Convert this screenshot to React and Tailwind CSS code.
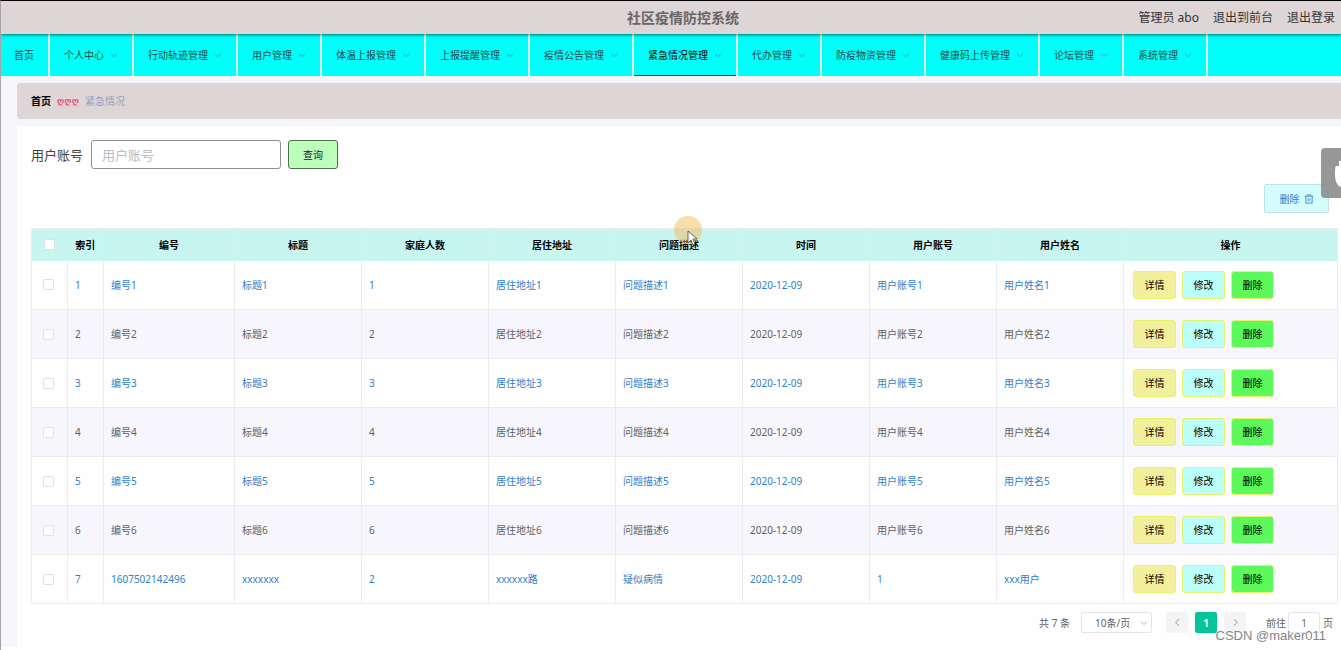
const menu = [
  "个人中心", "行动轨迹管理", "用户管理", "体温上报管理", "上报提醒管理", "疫情公告管理",
  "紧急情况管理", "代办管理", "防疫物资管理", "健康码上传管理", "论坛管理", "系统管理",
];
const heads = ["编号", "标题", "家庭人数", "居住地址", "问题描述", "时间", "用户账号", "用户姓名"];
const rows = [1, 2, 3, 4, 5, 6].map((n) => [
  `编号${n}`, `标题${n}`, `${n}`, `居住地址${n}`, `问题描述${n}`, "2020-12-09", `用户账号${n}`, `用户姓名${n}`,
]);
rows.push(["1607502142496", "xxxxxxx", "2", "xxxxxx路", "疑似病情", "2020-12-09", "1", "xxx用户"]);

const check = "block mx-auto size-[11px] appearance-none rounded-[2px] border border-[#dfe1e8] bg-white checked:bg-[#00c292]";
const action = "h-7 w-[43px] rounded-[3px] border border-[#e6f26a] text-black";

function TrashIcon() {
  return (
    <svg viewBox="0 0 10 10" className="size-[10px]" fill="none" stroke="currentColor" strokeWidth="0.8" aria-hidden="true">
      <path d="M0.8 2.2h8.4M3.3 2.2V0.9h3.4v1.3M1.8 2.2v6.9h6.4V2.2M4 4.1v3.2M6 4.1v3.2" />
    </svg>
  );
}

const chevrons = {
  down: "M1 2.5 4 5.7 7 2.5",
  left: "M5.4 1 2.4 4 5.4 7",
  right: "M2.6 1 5.6 4 2.6 7",
};

function Chevron({ to, className }) {
  return (
    <svg viewBox="0 0 8 8" className={className} fill="none" stroke="currentColor" strokeWidth="0.9" aria-hidden="true">
      <path d={chevrons[to]} />
    </svg>
  );
}

export default function App() {
  return (
    <div className="relative min-h-screen overflow-hidden border-l border-t border-l-[#a5a5a8] border-t-black bg-[#fefefe] font-['Noto_Sans','Noto_Sans_CJK_SC',sans-serif] text-[10px] leading-4 text-[#606266]">
      <header className="relative z-10 grid h-[33px] grid-cols-[1fr_auto_1fr] items-center bg-[#ded5d6] pl-[30px] pr-[6px] shadow-[0_1px_3px_rgba(0,0,0,0.55)]">
        <h1 className="col-start-2 text-sm font-bold text-[#666]">社区疫情防控系统</h1>
        <div className="flex justify-end gap-[14px] text-xs text-[#333]">
          <span>管理员 abo</span>
          <a href="#front">退出到前台</a>
          <a href="#logout">退出登录</a>
        </div>
      </header>

      <nav className="flex h-[42px] bg-[#00fffa] text-[#214a4d]">
        <a href="#home" className="flex items-center border-r-2 border-[#e4f7f8] pl-[13px] pr-[14px]">首页</a>
        {menu.map((m) => (
          <button
            key={m}
            type="button"
            className={
              m === "紧急情况管理"
                ? "flex items-center gap-[6px] border-r-2 border-r-[#e4f7f8] px-[14px] text-black shadow-[inset_0_-1px_0_#12303a]"
                : "flex items-center gap-[6px] border-r-2 border-r-[#e4f7f8] px-[14px]"
            }
          >
            <span className="whitespace-nowrap">{m}</span>
            <Chevron to="down" className="size-2 text-[#3f9fae]" />
          </button>
        ))}
      </nav>

      <div className="flex flex-col gap-[7px] bg-[#f6f6fc] pl-4 pt-[7px]">
        <div className="flex h-9 items-center gap-[6px] rounded-l-[3px] bg-[#ded5d6] px-[14px]">
          <a href="#home" className="font-bold text-black">首页</a>
          <span className="font-['DejaVu_Sans',sans-serif] text-[9px] font-bold text-[#ee5a80]">ღღღ</span>
          <span className="text-[#97a0bd]">紧急情况</span>
        </div>

        <main className="min-h-[521px] bg-[#fefefe] pb-3 pl-[14px] pr-[6px] pt-[14px]">
          <form className="flex items-center gap-2" onSubmit={(e) => e.preventDefault()}>
            <label htmlFor="account" className="text-[13px] text-[#44423a]">用户账号</label>
            <input
              id="account"
              placeholder="用户账号"
              className="h-[29px] w-[190px] rounded-[3px] border border-[#8f8f8f] bg-white px-[10px] text-[13px] placeholder:text-[#b9bcc8]"
            />
            <button type="submit" className="-ml-px h-[29px] w-[50px] rounded-[3px] border border-[#4c704f] bg-[#bbffbb] text-[#222]">查询</button>
          </form>

          <div className="mt-[15px] flex justify-end pr-[6px]">
            <button type="button" className="flex h-[29px] w-[65px] items-center justify-center gap-1 rounded-[2px] border border-[#c2e2ea] bg-[#d3fcfb] text-[#2f7fd0]">
              删除 <TrashIcon />
            </button>
          </div>

          <table className="mt-[15px] w-full table-fixed border-collapse border border-[#ebecf2]">
            <colgroup>
              <col className="w-[36px]" />
              <col className="w-[36px]" />
              <col className="w-[131px]" />
              {heads.slice(1).map((h) => <col key={h} className="w-[127px]" />)}
              <col className="w-[214px]" />
            </colgroup>
            <thead>
              <tr className="h-8 bg-[#c9f5f1] text-black">
                <th><input type="checkbox" aria-label="全选" className={check} /></th>
                <th className="border-r border-[#d3f3f0]">索引</th>
                {heads.map((h) => <th key={h} className="border-r border-[#d3f3f0]">{h}</th>)}
                <th>操作</th>
              </tr>
            </thead>
            <tbody>
              {rows.map((r, i) => (
                <tr key={i} className="h-[49px] border-b border-[#ebecf2] text-[#3280c8] even:bg-[#f6f6fc] even:text-[#606266]">
                  <td className="border-r border-[#ebecf2] pr-[2px]"><input type="checkbox" aria-label={`选择第${i + 1}行`} className={check} /></td>
                  <td className="border-r border-[#ebecf2] px-[7px]">{i + 1}</td>
                  {r.map((c, j) => <td key={j} className="border-r border-[#ebecf2] px-[7px]">{c}</td>)}
                  <td className="px-[9px]">
                    <div className="flex gap-[6px]">
                      <button type="button" className={`${action} bg-[#f3f09b]`}>详情</button>
                      <button type="button" className={`${action} bg-[#bbfffa]`}>修改</button>
                      <button type="button" className={`${action} bg-[#5cf85c]`}>删除</button>
                    </div>
                  </td>
                </tr>
              ))}
            </tbody>
          </table>

          <div className="mt-2 flex items-center justify-end pr-[2px]">
            <span className="mr-[11px]">共 7 条</span>
            <div className="relative mr-[14px]">
              <select aria-label="每页条数" className="h-[21px] w-[71px] appearance-none rounded-[2px] border border-[#e2e4ea] bg-white pl-[13px]">
                <option>10条/页</option>
              </select>
              <Chevron to="down" className="pointer-events-none absolute right-1 top-[7px] size-2 text-[#b0b3bd]" />
            </div>
            <div className="flex gap-[7px]">
              <button type="button" aria-label="上一页" className="flex h-[21px] w-[22px] items-center justify-center rounded-[2px] bg-[#f4f4f6] text-[#a9acb6]"><Chevron to="left" className="size-[9px]" /></button>
              <button type="button" className="h-[21px] w-[22px] rounded-[2px] bg-[#05c39a] font-bold text-white">1</button>
              <button type="button" aria-label="下一页" className="flex h-[21px] w-[22px] items-center justify-center rounded-[2px] bg-[#f4f4f6] text-[#a9acb6]"><Chevron to="right" className="size-[9px]" /></button>
            </div>
            <label htmlFor="page" className="ml-5 mr-[2px]">前往</label>
            <input id="page" defaultValue="1" className="mr-[3px] h-[21px] w-8 rounded-[2px] border border-[#e2e4ea] bg-white text-center" />
            <span>页</span>
          </div>
        </main>
      </div>

      <div className="absolute right-0 top-[147px] h-[50px] w-5 overflow-hidden rounded-l-[4px] bg-[#8b8d8d]/90">
        <svg viewBox="0 0 20 50" className="h-full w-full" fill="white" aria-hidden="true">
          <path d="M20 13h-2v5h-3c-1 1-1 4-1 8 0 7 2 12 6 13z" />
        </svg>
      </div>

      <svg viewBox="0 0 30 42" className="pointer-events-none absolute left-[672px] top-[215px] h-[42px] w-[30px]" aria-hidden="true">
        <circle cx="15" cy="14" r="14" fill="#f5b84c" fillOpacity="0.45" />
        <path d="M15 15v12l3-3 2 5 2-1-2-5h4z" fill="white" stroke="#444" strokeWidth="0.8" />
      </svg>

      <div className="pointer-events-none absolute bottom-[6px] right-[15px] font-['Liberation_Sans',sans-serif] text-[13px] text-[#85858a]">CSDN @maker011</div>
    </div>
  );
}
